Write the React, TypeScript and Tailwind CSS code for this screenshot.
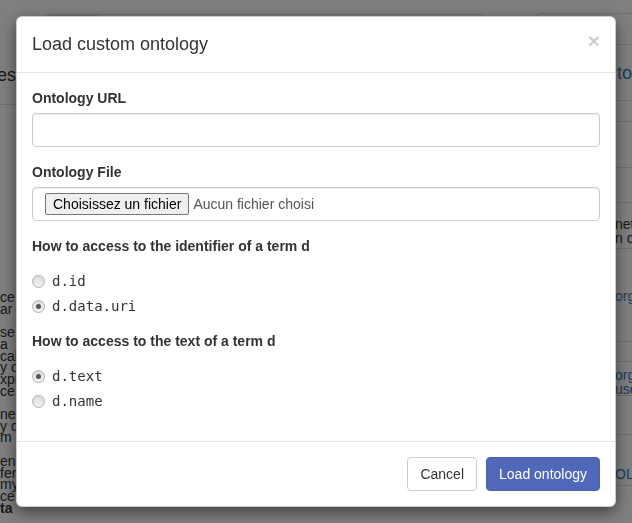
const tabs = [54, 69, 88, 58, 96, 73]

const leftParagraphs = [
  ['ce and', 'ar p'],
  ['se s', 'a', 'cal', 'y or', 'xpre', 'ce t'],
  ['nent', 'y d', 'm'],
  ['enet', 'fere', 'my', 'ce u'],
]

// right-hand table behind the dialog, only a 17px strip shows
const rightRows = [
  { h: 22, pt: 0, lines: [] as string[], link: false },
  { h: 48, pt: 0, lines: [], link: false },
  { h: 37, pt: 0, lines: [], link: false },
  { h: 48, pt: 14, lines: ['net', 'n o'], link: false },
  { h: 50, pt: 40, lines: ['org/'], link: true },
  { h: 45, pt: 0, lines: [], link: false },
  { h: 20, pt: 0, lines: [], link: false },
  { h: 34, pt: 6, lines: ['org/', 'use'], link: true },
  { h: 41, pt: 0, lines: [], link: false },
  { h: 52, pt: 32, lines: ['OL'], link: true },
  { h: 40, pt: 0, lines: [], link: false },
]

const radioGroups = [
  { title: 'How to access to the identifier of a term d', options: ['d.id', 'd.data.uri'], checked: 1 },
  { title: 'How to access to the text of a term d', options: ['d.text', 'd.name'], checked: 0 },
]

function Radio({ label, checked }: { label: string; checked: boolean }) {
  return (
    <label className="flex h-[20px] items-start gap-[7px] leading-[20px]">
      <span className="mt-[4px] flex h-[13px] w-[13px] items-center justify-center rounded-full border border-[#b1b1b1] bg-gradient-to-b from-[#dadada] to-[#f2f2f2]">
        {checked && <span className="h-[5px] w-[5px] rounded-full bg-[#555]" />}
      </span>
      <span className="font-['DejaVu_Sans_Mono',monospace] text-[14px] text-[#333]">{label}</span>
    </label>
  )
}

function BackgroundPage() {
  return (
    <div className="flex h-[523px] overflow-hidden bg-white text-[#333]">
      <div className="flex w-[483px] shrink-0 flex-col">
        <div className="ml-[45px] mt-[14px] flex h-[40px] w-[438px] rounded-t-[4px] border border-b-0 border-[#ddd]">
          {tabs.map((w, i) => (
            <div key={i} style={{ width: w }} className={i === 0 ? 'border-r border-[#ddd] bg-[#e6e6e6]' : 'border-r border-[#ddd]'} />
          ))}
        </div>
        <div className="-ml-[3px] h-[51px] border-b border-[#ddd] pt-[10px] text-[18px] leading-[22px]">est</div>
        <div className="mt-[187px] flex flex-col gap-[11.7px] text-[14px] leading-[11.7px]">
          {leftParagraphs.map((p, i) => (
            <p key={i}>
              {p.map((l, j) => (
                <span key={j} className="block">{l}</span>
              ))}
              {i === leftParagraphs.length - 1 && <span className="block font-bold">ta</span>}
            </p>
          ))}
        </div>
      </div>
      <div className="ml-[54px] flex flex-1 flex-col pt-[13px]">
        <div className="h-[32px] rounded-tl-[4px] border-l border-t border-[#ddd]" />
        <div className="h-[58px] border-t border-[#ddd] pl-[80px] pt-[17px] text-[18px] leading-[22px] text-[#337ab7]">to</div>
        {rightRows.map((r, i) => (
          <div
            key={i}
            style={{ height: r.h, paddingTop: r.pt }}
            className={r.link ? 'border-t border-[#ddd] pl-[78px] text-[14px] leading-[14px] text-[#337ab7]' : 'border-t border-[#ddd] pl-[78px] text-[14px] leading-[14px]'}
          >
            {r.lines.map((l) => (
              <span key={l} className="block">{l}</span>
            ))}
          </div>
        ))}
      </div>
    </div>
  )
}

export default function App() {
  return (
    <div className="relative h-[523px] w-[632px] overflow-hidden font-['Liberation_Sans',Arial,sans-serif]">
      <BackgroundPage />
      <div className="fixed inset-0 bg-black/50" />

      <div className="fixed left-[16px] top-[16px] w-[600px] rounded-[6px] border border-black/20 bg-white text-[14px] text-[#333] shadow-[0_5px_15px_rgba(0,0,0,0.5)]">
        <div className="flex items-start justify-between border-b border-[#e5e5e5] p-[15px]">
          <h4 className="text-[18px] leading-[25px]">Load custom ontology</h4>
          <button type="button" className="-mt-[2px] text-[21px] font-bold leading-none text-black opacity-20">
            ×
          </button>
        </div>

        <div className="flex flex-col p-[15px]">
          <label className="mb-[5px] font-bold leading-[20px]">Ontology URL</label>
          <div className="mb-[15px] h-[34px] rounded-[4px] border border-[#ccc] shadow-[inset_0_1px_1px_rgba(0,0,0,0.075)]" />

          <label className="mb-[5px] font-bold leading-[20px]">Ontology File</label>
          <div className="mb-[15px] flex h-[34px] items-center rounded-[4px] border border-[#ccc] px-[12px] shadow-[inset_0_1px_1px_rgba(0,0,0,0.075)]">
            <span className="flex h-[22px] items-center rounded-[2px] border border-[#767676] bg-[#efefef] px-[7px] text-[14px] text-black">
              Choisissez un fichier
            </span>
            <span className="ml-[4px] text-[#555]">Aucun fichier choisi</span>
          </div>

          {radioGroups.map((g) => (
            <div key={g.title} className="mb-[15px] flex flex-col">
              <label className="mb-[15px] font-bold leading-[20px]">{g.title}</label>
              <div className="flex flex-col gap-[5px]">
                {g.options.map((o, i) => (
                  <Radio key={o} label={o} checked={i === g.checked} />
                ))}
              </div>
            </div>
          ))}
        </div>

        <div className="flex justify-end gap-[9px] border-t border-[#e5e5e5] p-[15px]">
          <button type="button" className="h-[34px] rounded-[4px] border border-[#ccc] bg-white px-[12px] leading-[20px] text-[#333]">
            Cancel
          </button>
          <button type="button" className="h-[34px] rounded-[4px] border border-[#4861b1] bg-[#5068b9] px-[12px] leading-[20px] text-white">
            Load ontology
          </button>
        </div>
      </div>
    </div>
  )
}
